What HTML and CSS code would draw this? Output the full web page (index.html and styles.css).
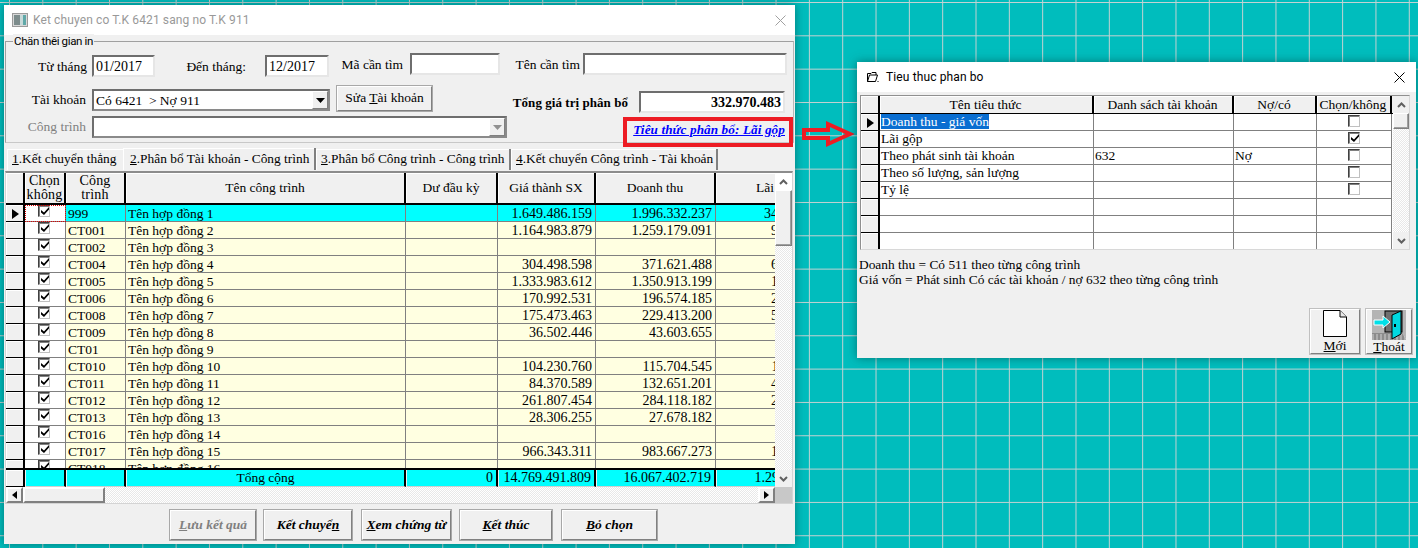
FILE: index.html
```html
<!DOCTYPE html>
<html lang="vi">
<head>
<meta charset="utf-8">
<title>Ket chuyen</title>
<link rel="stylesheet" href="styles.css">
</head>
<body>
<svg class="defs" width="0" height="0" aria-hidden="true">
  <symbol id="chk" viewBox="0 0 8 8"><path d="M0 3 L3 5.4 L8 0 V2.6 L3 8 L0 5.4 Z" fill="#000"/></symbol>
  <symbol id="down" viewBox="0 0 9 5"><path d="M0 0 H9 L4.5 5 Z" fill="currentColor"/></symbol>
  <symbol id="chev-up" viewBox="0 0 9 6"><path d="M1 5 L4.5 1.5 L8 5" fill="none" stroke="#606060" stroke-width="2"/></symbol>
  <symbol id="chev-down" viewBox="0 0 9 6"><path d="M1 1 L4.5 4.5 L8 1" fill="none" stroke="#606060" stroke-width="2"/></symbol>
</svg>

<section class="win win-main">
  <header class="titlebar">
    <svg class="tb-icon" width="16" height="14" viewBox="0 0 16 14"><rect x=".5" y=".5" width="15" height="13" fill="#d8d8d8" stroke="#9a9a9a"/><rect x="2" y="2" width="6" height="10" fill="#7d8c8c"/><rect x="8" y="2" width="3" height="10" fill="#c7d9d9"/><rect x="11" y="2" width="3" height="10" fill="#5fa8a8"/></svg>
    <span class="tb-text dim-title">Ket chuyen co T.K 6421 sang no T.K 911</span>
    <svg class="tb-x" width="11" height="11" viewBox="0 0 11 11"><path d="M.5 .5 L10.5 10.5 M10.5 .5 L.5 10.5" stroke="#a0a0a0" fill="none"/></svg>
  </header>

  <div class="group">
    <span class="legend">Chän thêi gian in</span>
    <div class="frow frow1">
      <span class="lbl l-tu">Từ tháng</span><span class="inp i-tu">01/2017</span>
      <span class="lbl l-den">Đến tháng:</span><span class="inp i-den">12/2017</span>
      <span class="lbl l-ma up">Mã cần tìm</span><span class="inp i-ma up"></span>
      <span class="lbl l-ten up">Tên cần tìm</span><span class="inp i-ten up"></span>
    </div>
    <div class="frow frow2">
      <span class="lbl l-tk">Tài khoản</span>
      <span class="inp combo c-tk">Có 6421&nbsp; &gt; Nợ 911<span class="drop"><svg width="9" height="5"><use href="#down"/></svg></span></span>
      <span class="btn b-sua">Sửa <u>T</u>ài khoản</span>
      <strong class="lbl l-tong">Tổng giá trị phân bổ</strong>
      <span class="inp i-tong">332.970.483</span>
    </div>
    <div class="frow frow3">
      <span class="lbl l-ct dim">Công trình</span>
      <span class="inp combo c-ct"><span class="drop dim"><svg width="9" height="5"><use href="#down"/></svg></span></span>
      <span class="redbox"><a class="link" href="#">Tiêu thức phân bổ: Lãi gộp</a></span>
    </div>
  </div>

  <nav class="tabs">
    <span class="tab t1"><u>1</u>.Kết chuyển thẳng</span>
    <span class="tab t2 on"><u>2</u>.Phân bổ Tài khoản - Công trình</span>
    <span class="tab t3"><u>3</u>.Phân bổ Công trình - Công trình</span>
    <span class="tab t4"><u>4</u>.Kết chuyển Công trình - Tài khoản</span>
  </nav>

  <div class="grid">
    <div class="grid-top">
      <div class="grid-main">
        <div class="row head">
          <span></span><span class="wide">Chọn<br>không</span><span class="wide">Công<br>trình</span><span>Tên công trình</span><span>Dư đầu kỳ</span><span>Giá thành SX</span><span>Doanh thu</span><span class="clip">Lãi gộp</span>
        </div>
        <div class="rows">
          <div class="row sel"><span class="ind cur"></span><span class="chk focus"><b class="cb"><svg width="8" height="8"><use href="#chk"/></svg></b></span><span class="code">999</span><span>Tên hợp đồng 1</span><span class="n"></span><span class="n">1.649.486.159</span><span class="n">1.996.332.237</span><span class="n cut"><i>346.845.078</i></span></div>
          <div class="row"><span class="ind"></span><span class="chk"><b class="cb"><svg width="8" height="8"><use href="#chk"/></svg></b></span><span class="code">CT001</span><span>Tên hợp đồng 2</span><span class="n"></span><span class="n">1.164.983.879</span><span class="n">1.259.179.091</span><span class="n cut"><i>94.195.212</i></span></div>
          <div class="row"><span class="ind"></span><span class="chk"><b class="cb"><svg width="8" height="8"><use href="#chk"/></svg></b></span><span class="code">CT002</span><span>Tên hợp đồng 3</span><span class="n"></span><span class="n"></span><span class="n"></span><span class="n cut"></span></div>
          <div class="row"><span class="ind"></span><span class="chk"><b class="cb"><svg width="8" height="8"><use href="#chk"/></svg></b></span><span class="code">CT004</span><span>Tên hợp đồng 4</span><span class="n"></span><span class="n">304.498.598</span><span class="n">371.621.488</span><span class="n cut"><i>67.122.890</i></span></div>
          <div class="row"><span class="ind"></span><span class="chk"><b class="cb"><svg width="8" height="8"><use href="#chk"/></svg></b></span><span class="code">CT005</span><span>Tên hợp đồng 5</span><span class="n"></span><span class="n">1.333.983.612</span><span class="n">1.350.913.199</span><span class="n cut"><i>16.929.587</i></span></div>
          <div class="row"><span class="ind"></span><span class="chk"><b class="cb"><svg width="8" height="8"><use href="#chk"/></svg></b></span><span class="code">CT006</span><span>Tên hợp đồng 6</span><span class="n"></span><span class="n">170.992.531</span><span class="n">196.574.185</span><span class="n cut"><i>25.581.654</i></span></div>
          <div class="row"><span class="ind"></span><span class="chk"><b class="cb"><svg width="8" height="8"><use href="#chk"/></svg></b></span><span class="code">CT008</span><span>Tên hợp đồng 7</span><span class="n"></span><span class="n">175.473.463</span><span class="n">229.413.200</span><span class="n cut"><i>53.939.737</i></span></div>
          <div class="row"><span class="ind"></span><span class="chk"><b class="cb"><svg width="8" height="8"><use href="#chk"/></svg></b></span><span class="code">CT009</span><span>Tên hợp đồng 8</span><span class="n"></span><span class="n">36.502.446</span><span class="n">43.603.655</span><span class="n cut"></span></div>
          <div class="row"><span class="ind"></span><span class="chk"><b class="cb"><svg width="8" height="8"><use href="#chk"/></svg></b></span><span class="code">CT01</span><span>Tên hợp đồng 9</span><span class="n"></span><span class="n"></span><span class="n"></span><span class="n cut"></span></div>
          <div class="row"><span class="ind"></span><span class="chk"><b class="cb"><svg width="8" height="8"><use href="#chk"/></svg></b></span><span class="code">CT010</span><span>Tên hợp đồng 10</span><span class="n"></span><span class="n">104.230.760</span><span class="n">115.704.545</span><span class="n cut"><i>11.473.785</i></span></div>
          <div class="row"><span class="ind"></span><span class="chk"><b class="cb"><svg width="8" height="8"><use href="#chk"/></svg></b></span><span class="code">CT011</span><span>Tên hợp đồng 11</span><span class="n"></span><span class="n">84.370.589</span><span class="n">132.651.201</span><span class="n cut"><i>48.280.612</i></span></div>
          <div class="row"><span class="ind"></span><span class="chk"><b class="cb"><svg width="8" height="8"><use href="#chk"/></svg></b></span><span class="code">CT012</span><span>Tên hợp đồng 12</span><span class="n"></span><span class="n">261.807.454</span><span class="n">284.118.182</span><span class="n cut"><i>22.310.728</i></span></div>
          <div class="row"><span class="ind"></span><span class="chk"><b class="cb"><svg width="8" height="8"><use href="#chk"/></svg></b></span><span class="code">CT013</span><span>Tên hợp đồng 13</span><span class="n"></span><span class="n">28.306.255</span><span class="n">27.678.182</span><span class="n cut"></span></div>
          <div class="row"><span class="ind"></span><span class="chk"><b class="cb"><svg width="8" height="8"><use href="#chk"/></svg></b></span><span class="code">CT016</span><span>Tên hợp đồng 14</span><span class="n"></span><span class="n"></span><span class="n"></span><span class="n cut"></span></div>
          <div class="row"><span class="ind"></span><span class="chk"><b class="cb"><svg width="8" height="8"><use href="#chk"/></svg></b></span><span class="code">CT017</span><span>Tên hợp đồng 15</span><span class="n"></span><span class="n">966.343.311</span><span class="n">983.667.273</span><span class="n cut"><i>17.323.962</i></span></div>
          <div class="row"><span class="ind"></span><span class="chk"><b class="cb"><svg width="8" height="8"><use href="#chk"/></svg></b></span><span class="code">CT018</span><span>Tên hợp đồng 16</span><span class="n"></span><span class="n"></span><span class="n"></span><span class="n cut"></span></div>
        </div>
        <div class="row foot">
          <span class="ind"></span><span></span><span></span><span class="mid">Tổng cộng</span><span class="n">0</span><span class="n">14.769.491.809</span><span class="n">16.067.402.719</span><span class="n cut"><i>1.297.910.910</i></span>
        </div>
      </div>
      <div class="vscroll vs-main">
        <span class="arrow"><svg width="9" height="6"><use href="#chev-up"/></svg></span><span class="thumb"></span><span class="track"></span><span class="arrow"><svg width="9" height="6"><use href="#chev-down"/></svg></span>
      </div>
    </div>
    <div class="hscroll">
      <span class="hbtn"><i class="tri-l"></i></span><span class="hthumb"></span><span class="htrack"></span><span class="hbtn"><i class="tri-r"></i></span><span class="corner"></span>
    </div>
  </div>

  <footer class="actions">
    <span class="act a1 dim"><u>L</u>ưu kết quả</span>
    <span class="act a2">Kết chuyể<u>n</u></span>
    <span class="act a3"><u>X</u>em chứng từ</span>
    <span class="act a4"><u>K</u>ết thúc</span>
    <span class="act a5"><u>B</u>ỏ chọn</span>
  </footer>
</section>

<svg class="bigarrow" width="54" height="28" viewBox="0 0 54 28"><path d="M3 10 H27 V4 L49 14 L27 24 V18 H3 Z" fill="none" stroke="#ed1c24" stroke-width="4"/></svg>

<section class="win win-side">
  <header class="titlebar">
    <svg class="tb-icon2" width="13" height="13" viewBox="0 0 13 13"><path d="M1.5 2.5 H5 L6 1.5 H10 V4 M1.5 2.5 V10.5 H9.5 L11.5 4 H3.5 L1.5 10.5" fill="#fff" stroke="#000"/><rect x="11.5" y="10" width="1" height="1"/></svg>
    <span class="tb-text">Tieu thuc phan bo</span>
    <svg class="tb-x" width="11" height="11" viewBox="0 0 11 11"><path d="M.5 .5 L10.5 10.5 M10.5 .5 L.5 10.5" stroke="#000" fill="none"/></svg>
  </header>
  <div class="sgrid">
    <div class="sg-main">
      <div class="srow shead"><span></span><span>Tên tiêu thức</span><span>Danh sách tài khoản</span><span>Nợ/có</span><span>Chọn/không</span></div>
      <div class="srow"><span class="ind cur"></span><span><mark class="hl">Doanh thu - giá vốn</mark></span><span></span><span></span><span class="chk"><b class="cb"></b></span></div>
      <div class="srow"><span class="ind"></span><span>Lãi gộp</span><span></span><span></span><span class="chk"><b class="cb"><svg width="8" height="8"><use href="#chk"/></svg></b></span></div>
      <div class="srow"><span class="ind"></span><span>Theo phát sinh tài khoản</span><span>632</span><span>Nợ</span><span class="chk"><b class="cb"></b></span></div>
      <div class="srow"><span class="ind"></span><span>Theo số lượng, sản lượng</span><span></span><span></span><span class="chk"><b class="cb"></b></span></div>
      <div class="srow"><span class="ind"></span><span>Tỷ lệ</span><span></span><span></span><span class="chk"><b class="cb"></b></span></div>
      <div class="srow"><span class="ind"></span><span></span><span></span><span></span><span></span></div>
      <div class="srow"><span class="ind"></span><span></span><span></span><span></span><span></span></div>
      <div class="srow"><span class="ind"></span><span></span><span></span><span></span><span></span></div>
    </div>
    <div class="vscroll vs-side">
      <span class="arrow"><svg width="9" height="6"><use href="#chev-up"/></svg></span><span class="thumb"></span><span class="track"></span><span class="arrow"><svg width="9" height="6"><use href="#chev-down"/></svg></span>
    </div>
  </div>
  <p class="notes">Doanh thu = Có 511 theo từng công trình<br>Giá vốn = Phát sinh Có các tài khoản / nợ 632 theo từng công trình</p>
  <div class="sactions">
    <span class="tool">
      <svg width="24" height="27" viewBox="0 0 24 27"><path d="M.5 .5 H17 L23.5 7 V26.5 H.5 Z" fill="#fff" stroke="#000"/><path d="M17 .5 V7 H23.5" fill="#e8e8e8" stroke="#000"/></svg>
      <span class="tool-l"><u>M</u>ới</span>
    </span>
    <span class="tool">
      <svg width="34" height="30" viewBox="0 0 34 30">
        <rect width="34" height="30" fill="#b4b4b4"/>
        <path d="M0 23 H30 L34 30 H0 Z" fill="#8c8c8c"/>
        <path d="M0 25 H32 M0 27 H33 M0 29 H34" stroke="#d0d0d0" stroke-dasharray="2 2"/>
        <rect x="13" y="1" width="17" height="21" fill="#707070" stroke="#000"/>
        <path d="M20 5 L29 1 V24 L20 29 Z" fill="#00d8e0" stroke="#000"/>
        <rect x="22" y="14" width="2" height="3" fill="#000"/>
        <path d="M2 10 H11 V6 L18 12 L11 18 V15 H2 Z" fill="#00e0e8" stroke="#fff"/>
      </svg>
      <span class="tool-l"><u>T</u>hoát</span>
    </span>
  </div>
</section>
</body>
</html>
```
FILE: styles.css
```css
* { box-sizing: border-box; }
html, body { margin: 0; height: 100%; }
body {
  position: relative;
  width: 1418px; height: 548px; overflow: hidden;
  font: 13.5px/17px "Liberation Serif", serif;
  color: #000;
  background-color: #00bdbd;
  background-image:
    linear-gradient(90deg, #c6d2d2 1px, transparent 1px),
    linear-gradient(#c6d2d2 1px, transparent 1px);
  background-size: 33.33px 33.33px;
  background-position: 9px 2px;
}
.defs { position: absolute; }
.dim { color: #808080; }
.dim-title { color: #999; }

.win {
  position: absolute;
  background: #f0f0f0;
  box-shadow: 0 0 9px rgba(0, 60, 60, .55);
}
.win-main { left: 4px; top: 5px; width: 791px; height: 539px; }
.win-side { left: 857px; top: 62px; width: 559px; height: 296px; }

.titlebar {
  height: 30px; background: #fff;
  display: flex; align-items: center;
  font: 12px Roboto, sans-serif;
}
.tb-icon { margin-left: 8px; }
.tb-icon2 { margin-left: 9px; }
.tb-text { margin-left: 5px; letter-spacing: .12px; }
.win-main .tb-text { padding-bottom: 1px; }
.win-side .tb-text { margin-left: 7px; }
.tb-x { margin-left: auto; }
.win-main .tb-x { margin-right: 9px; }
.win-side .tb-x { margin-right: 11px; }

/* group */
.group {
  position: relative;
  margin: 6px 1px 0;
  height: 102px;
  border: 1px solid #a0a0a0;
  border-color: #a0a0a0 #b8b8b8 #c8c8c8 #a0a0a0;
}
.legend {
  position: absolute; left: 7px; top: -8px; padding: 0 1px;
  background: #f0f0f0;
  font: 11.5px/15px Roboto, sans-serif;
  letter-spacing: -.35px;
}
.frow { display: flex; align-items: flex-start; }
.frow1 { padding-top: 13px; height: 47px; }
.frow2 { height: 27px; }
.frow3 { height: 28px; }
.lbl { display: block; text-align: right; white-space: nowrap; line-height: 17px; margin-top: 3px; }
.inp {
  display: block; background: #fff; height: 22px;
  border: 2px solid; border-color: #6e6e6e #e6e6e6 #e6e6e6 #6e6e6e;
  font-size: 14px; line-height: 19px; padding: 0 2px; position: relative; white-space: nowrap;
}
.up { position: relative; top: -2px; }
.l-tu { width: 81px; }
.i-tu { width: 63px; margin-left: 5px; }
.l-den { width: 91px; }
.i-den { width: 64px; margin-left: 19px; }
.l-ma { width: 74px; }
.i-ma { width: 90px; margin-left: 7px; }
.l-ten { width: 80px; }
.i-ten { width: 204px; margin-left: 3px; }
.l-tk { width: 80px; margin-top: 2px; }
.combo { border-color: #6e6e6e #8a8a8a #8a8a8a #6e6e6e; padding-left: 2px; }
.c-tk { width: 238px; margin-left: 6px; font-size: 13.5px; line-height: 20px; }
.c-ct { width: 415px; margin-left: 6px; height: 22px; }
.l-ct { width: 80px; margin-top: 2px; }
.drop {
  position: absolute; right: 0; top: 0; bottom: 0; width: 16px;
  background: #f0f0f0; border: 1px solid #fff; border-color: #fff #808080 #808080 #fff;
  display: flex; align-items: center; justify-content: center; color: #000;
}
.drop.dim { color: #909090; }
.btn {
  display: block; background: #f0f0f0; text-align: center;
  border: 2px solid; border-color: #fff #808080 #808080 #fff;
  outline: 1px solid #a8a8a8; outline-offset: -1px;
}
.b-sua { width: 97px; height: 27px; margin-left: 6px; margin-top: -4px; line-height: 22px; }
.l-tong { width: 116px; margin-left: 79px; margin-right: 1px; font-size: 13px; letter-spacing: .05px; margin-top: 5px; }
.i-tong { width: 146px; margin-left: 10px; margin-top: 2px; text-align: right; font-weight: bold; padding-right: 2px; }
.redbox {
  position: absolute; left: 617px; top: 75px; width: 170px; height: 30px;
  border: 4px solid #ed1c24; text-align: right; padding: 0 4px 0 0;
}
.link { color: #0000ff; font: italic bold 13.2px/17px "Liberation Serif", serif; text-decoration: underline; letter-spacing: .1px; }

/* tabs */
.tabs { display: flex; margin: 5px 0 0 3px; height: 22px; }
.tab {
  display: block; height: 21px; margin-top: 1px; white-space: nowrap; padding: 1px 0 0 5px; font-size: 13.4px;
  border-right: 2px solid #808080;
  box-shadow: inset 1px 1px 0 #fff;
}
.t1 { width: 116px; border-right: 0; }
.t2 { width: 193px; margin-top: 0; height: 22px; padding: 2px 0 0 7px; }
.t3 { width: 195px; padding-left: 5px; }
.t4 { width: 207px; padding-left: 5px; }

/* grid */
.grid { margin: 1px 2px 0 1px; height: 333px; border: 1px solid #d4d4d4; border-top: 2px solid #8c8c8c; }
.grid-top { display: flex; height: 314px; background: #fff; }
.grid-main { width: 771px; overflow: hidden; }
.row {
  display: grid;
  grid-template-columns: 19px 41px 60px 280px 92px 98px 120px 61px;
  height: 17px; background: #ffffe1;
  white-space: nowrap;
}
.row > span {
  display: block; overflow: hidden; padding: 0 2px;
  border-right: 1px solid #808080; border-bottom: 1px solid #808080; height: 17px; line-height: 17px;
}
.row .n { text-align: right; font-size: 14px; padding-right: 3px; }
.row > span.cut { padding: 0; border-right: 0; }
.cut i { display: block; width: 118px; text-align: right; font-style: normal; }
.head {
  height: 32px; background: #f0f0f0; border-bottom: 2px solid #000;
}
.head > span {
  height: 30px; line-height: 14px; text-align: center; border-bottom: 0; border-right: 2px solid #000;
  display: flex; align-items: center; justify-content: center;
  box-shadow: inset 1px 1px 0 #fff;
}
.head > span.wide { font-size: 14px; letter-spacing: .2px; padding: 0; }
.head > span.clip { border-right: 0; justify-content: flex-start; padding-left: 40px; }
.rows { height: 263px; overflow: hidden; }
.sel { background: #00ffff; }
.ind { background: #f0f0f0; border-right: 2px solid #000 !important; border-bottom-color: #000 !important; box-shadow: inset 1px 1px 0 #fff; position: relative; }
.cur::after {
  content: ""; position: absolute; left: 6px; top: 4px;
  border-left: 7px solid #000; border-top: 5.5px solid transparent; border-bottom: 5.5px solid transparent;
}
.row > .chk, .srow > .chk { background: #fff; position: relative; padding: 0; }
.focus { outline: 1px dotted #e00000; outline-offset: -1px; }
.cb {
  display: block; width: 12px; height: 12px; background: #fff;
  border: 1px solid; border-color: #404040 #c0c0c0 #c0c0c0 #404040;
  box-shadow: inset 1px 1px 0 #808080;
  padding: 1px 0 0 2px;
}
.row .cb { margin: 0 0 0 13px; }
.cb svg { display: block; }
.foot { height: 19px; background: #f0f0f0; border-top: 2px solid #000; }
.foot > span {
  background: #00ffff; border-right: 2px solid #000; border-bottom: 1px solid #d0d0d0; margin-left: 1px; line-height: 15px !important;
}
.foot > .ind { background: #f0f0f0; margin-left: 0; }
.foot > .mid { text-align: center; }

.vscroll {
  width: 17px; display: flex; flex-direction: column;
  background: #f4f4f4;
  background-image: repeating-conic-gradient(#fff 0 25%, #e8e8e8 0 50%);
  background-size: 2px 2px;
}
.arrow {
  display: flex; align-items: center; justify-content: center; height: 17px; background: #fff; flex: none;
}
.arrow:last-child { background: #f0f0f0; }
.thumb {
  display: block; height: 56px; background: #f0f0f0; flex: none;
  border: 1px solid; border-color: #fff #808080 #808080 #fff;
  box-shadow: inset -1px -1px 0 #a0a0a0;
}
.track { flex: 1; }
.vs-side .thumb { height: 16px; }
.vs-side .arrow { background: #f0f0f0; }

.hscroll { display: flex; height: 16px; background-image: repeating-conic-gradient(#fff 0 25%, #e8e8e8 0 50%); background-size: 2px 2px; }
.hbtn {
  width: 17px; background: #f0f0f0; display: flex; align-items: center; justify-content: center;
  border: 2px solid; border-color: #fff #808080 #808080 #fff;
}
.tri-l { border-right: 5px solid #000; border-top: 4px solid transparent; border-bottom: 4px solid transparent; }
.tri-r { border-left: 5px solid #000; border-top: 4px solid transparent; border-bottom: 4px solid transparent; }
.hthumb {
  width: 82px; background: #f0f0f0;
  border: 2px solid; border-color: #fff #808080 #808080 #fff;
}
.htrack { flex: 1; }
.corner { width: 17px; background: #c8c8c8; }

/* actions */
.actions { display: flex; padding: 5px 0 0 165px; font: italic bold 13.5px/28px "Liberation Serif", serif; }
.act {
  display: block; height: 32px; text-align: center; background: #f0f0f0;
  border: 2px solid; border-color: #fff #808080 #808080 #fff;
  outline: 1px solid #a8a8a8; outline-offset: -1px;
}
.a1 { width: 88px; }
.a2 { width: 90px; margin-left: 6px; }
.a3 { width: 91px; margin-left: 8px; }
.a4 { width: 94px; margin-left: 7px; }
.a5 { width: 97px; margin-left: 8px; }

/* side window */
.sgrid { margin: 3px 6px 0 3px; display: flex; height: 155px; background: #fff; border: 1px solid #d8d8d8; border-top-color: #909090; border-left-color: #909090; }
.sg-main { width: 532px; overflow: hidden; }
.srow {
  display: grid; grid-template-columns: 19px 214px 140px 83px 75px;
  height: 17px; white-space: nowrap;
}
.srow > span { display: block; padding: 0 2px 0 1px; border-right: 1px solid #808080; border-bottom: 1px solid #808080; line-height: 15px; height: 17px; overflow: hidden; }
.shead { background: #f0f0f0; height: 18px; border-bottom: 1px solid #000; }
.shead > span { text-align: center; border-right: 2px solid #000; border-bottom: 0; box-shadow: inset 1px 1px 0 #fff; line-height: 17px; }
.srow .cb { margin: 1px 0 0 31px; }
.hl { background: #0a6ed1; color: #fff; }
.vs-side { width: 16px; }
.notes { margin: 7px 0 0 2px; line-height: 15px; font-size: 13.4px; }
.sactions { display: flex; justify-content: flex-end; margin-top: 21px; padding-right: 3px; gap: 4px; }
.tool {
  display: flex; flex-direction: column; align-items: center; width: 52px; height: 47px;
  border: 2px solid; border-color: #fff #808080 #808080 #fff;
  outline: 1px solid #c0c0c0; outline-offset: -1px;
}
.tool svg { display: block; flex: none; }
.tool-l { line-height: 13px; margin-top: auto; margin-bottom: 1px; position: relative; }
.tool + .tool { width: 48px; }

.bigarrow { position: absolute; left: 801px; top: 120px; }
```
